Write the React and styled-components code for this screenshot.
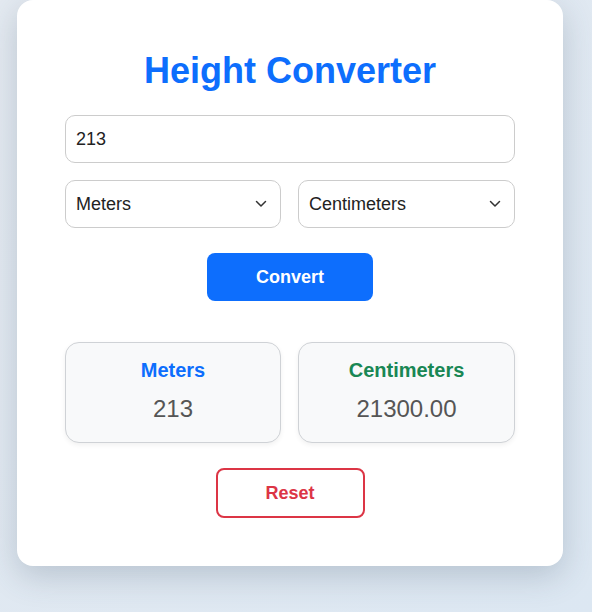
import styled, { createGlobalStyle } from "styled-components";

const GlobalStyle = createGlobalStyle`
  html, body {
    margin: 0;
    padding: 0;
  }

  body {
    min-height: 100vh;
    background: linear-gradient(135deg, #e4eaf1 0%, #dce7f2 100%);
    font-family: "Liberation Sans", Arial, sans-serif;
  }
`;

const units = [
  { value: "m", label: "Meters" },
  { value: "cm", label: "Centimeters" },
  { value: "ft", label: "Feet" },
];

function Chevron() {
  return (
    <ChevronIcon width="12" height="8" viewBox="0 0 12 8" aria-hidden="true">
      <path
        d="M1.5 1.5 L6 6 L10.5 1.5"
        fill="none"
        stroke="#333"
        strokeWidth="1.5"
        strokeLinecap="round"
        strokeLinejoin="round"
      />
    </ChevronIcon>
  );
}

function UnitPicker({ value }) {
  return (
    <SelectWrap>
      <UnitSelect defaultValue={value}>
        {units.map((u) => (
          <option key={u.value} value={u.value}>
            {u.label}
          </option>
        ))}
      </UnitSelect>
      <Chevron />
    </SelectWrap>
  );
}

function App() {
  return (
    <>
      <GlobalStyle />
      <Page>
        <Card>
          <Title>Height Converter</Title>
          <ValueInput type="text" defaultValue="213" />
          <Row>
            <UnitPicker value="m" />
            <UnitPicker value="cm" />
          </Row>
          <Center>
            <ConvertButton>Convert</ConvertButton>
          </Center>
          <Results>
            <ResultBox>
              <ResultLabel $color="#0d6efd">Meters</ResultLabel>
              <ResultValue>213</ResultValue>
            </ResultBox>
            <ResultBox>
              <ResultLabel $color="#198754">Centimeters</ResultLabel>
              <ResultValue>21300.00</ResultValue>
            </ResultBox>
          </Results>
          <Center>
            <ResetButton>Reset</ResetButton>
          </Center>
        </Card>
      </Page>
    </>
  );
}

export default App;

const Page = styled.div`
  padding-left: 17px;
  padding-bottom: 40px;
`;

const Card = styled.div`
  width: 546px;
  box-sizing: border-box;
  background: #ffffff;
  border-radius: 16px;
  padding: 50px 48px 48px;
  box-shadow: 0 10px 32px rgba(60, 80, 100, 0.24);
`;

const Title = styled.h1`
  margin: 0 0 24px;
  text-align: center;
  color: #0d6efd;
  font-size: 36px;
  font-weight: 700;
  line-height: 41px;
`;

const ValueInput = styled.input`
  display: block;
  width: 100%;
  box-sizing: border-box;
  height: 48px;
  padding: 0 10px;
  border: 1px solid #cccccc;
  border-radius: 10px;
  font-family: "Liberation Sans", Arial, sans-serif;
  font-size: 18px;
  color: #222222;
  outline: none;
`;

const Row = styled.div`
  display: grid;
  grid-template-columns: 216px 217px;
  gap: 17px;
  margin-top: 17px;
`;

const SelectWrap = styled.div`
  position: relative;
`;

const UnitSelect = styled.select`
  display: block;
  width: 100%;
  box-sizing: border-box;
  height: 48px;
  padding: 0 32px 0 10px;
  border: 1px solid #cccccc;
  border-radius: 10px;
  background: #ffffff;
  appearance: none;
  -webkit-appearance: none;
  font-family: "Liberation Sans", Arial, sans-serif;
  font-size: 18px;
  color: #222222;
  outline: none;
`;

const ChevronIcon = styled.svg`
  position: absolute;
  right: 14px;
  top: 50%;
  transform: translateY(-50%);
  pointer-events: none;
`;

const Center = styled.div`
  display: flex;
  justify-content: center;
`;

const ConvertButton = styled.button`
  margin-top: 25px;
  width: 166px;
  height: 48px;
  border: none;
  border-radius: 8px;
  background: #0d6efd;
  color: #ffffff;
  font-family: "Liberation Sans", Arial, sans-serif;
  font-size: 18px;
  font-weight: 700;
  cursor: pointer;
`;

const Results = styled.div`
  display: grid;
  grid-template-columns: 216px 217px;
  gap: 17px;
  margin-top: 41px;
`;

const ResultBox = styled.div`
  box-sizing: border-box;
  height: 101px;
  padding-top: 16px;
  border: 1px solid #cfd2d6;
  border-radius: 14px;
  background: #f8f9fa;
  box-shadow: 0 2px 5px rgba(0, 0, 0, 0.06);
  text-align: center;
`;

const ResultLabel = styled.div`
  color: ${(p) => p.$color};
  font-size: 20px;
  font-weight: 700;
  line-height: 23px;
`;

const ResultValue = styled.div`
  margin-top: 13px;
  color: #555555;
  font-size: 24px;
  line-height: 28px;
`;

const ResetButton = styled.button`
  margin-top: 25px;
  width: 149px;
  height: 50px;
  border: 2px solid #dc3545;
  border-radius: 8px;
  background: #ffffff;
  color: #dc3545;
  font-family: "Liberation Sans", Arial, sans-serif;
  font-size: 18px;
  font-weight: 700;
  cursor: pointer;
`;
